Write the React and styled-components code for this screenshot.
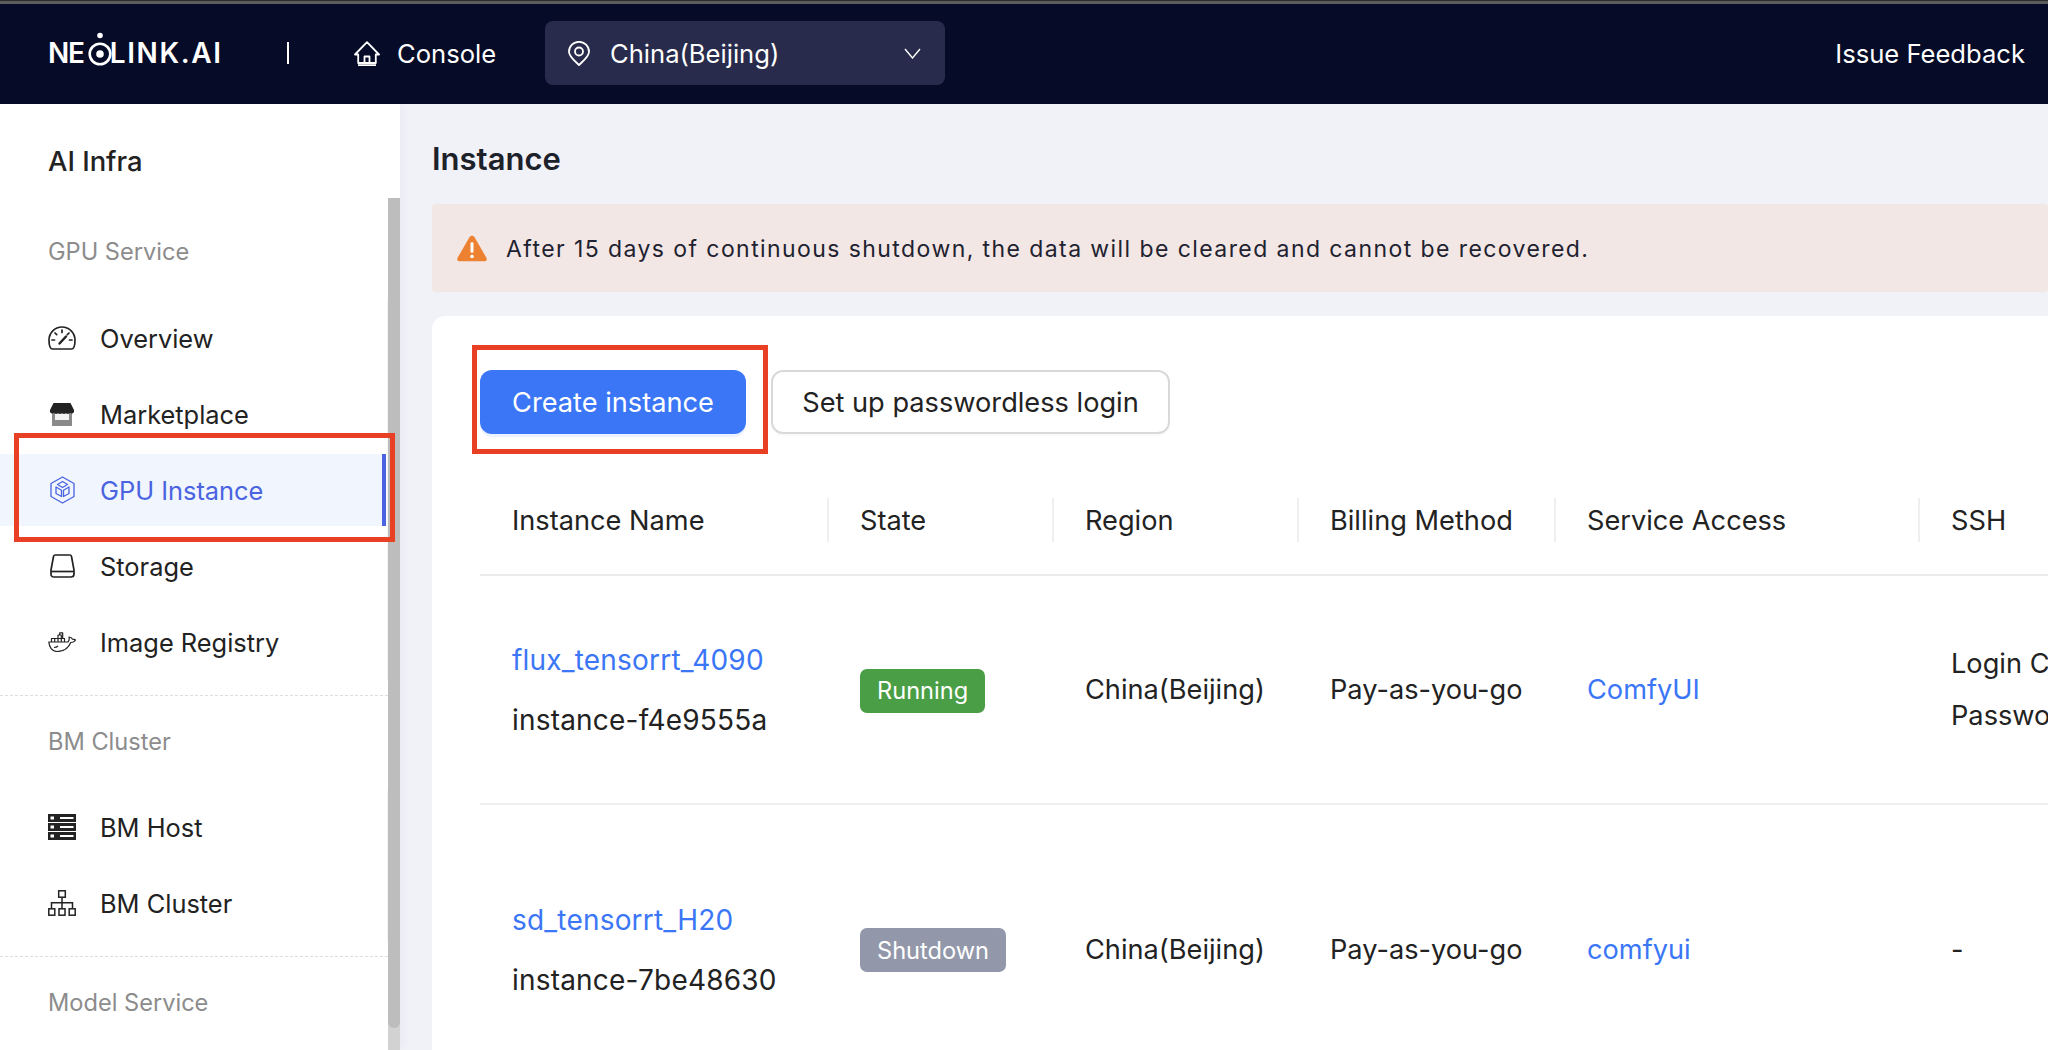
import styled, { createGlobalStyle } from "styled-components";

const GlobalStyle = createGlobalStyle`
  html, body {
    margin: 0;
    padding: 0;
    background: #f1f2f8;
  }
  * {
    box-sizing: border-box;
  }
`;

const HomeIcon = () => (
  <svg width="26" height="25" viewBox="0 0 26 25" fill="none" stroke="#fff" strokeWidth="1.8" strokeLinejoin="round">
    <path d="M1 13.5 13 1.2l12 12.3h-3.2V22H4.2v-8.5z" />
    <path d="M10.5 22v-6.5h5V22M4 24.2h18" />
  </svg>
);

const PinIcon = () => (
  <svg width="22" height="25" viewBox="0 0 22 25" fill="none" stroke="#fff" strokeWidth="1.8">
    <path d="M11 24C7 20 1 15.8 1 10.8a10 10 0 0 1 20 0C21 15.8 15 20 11 24z" strokeLinejoin="round" />
    <circle cx="11" cy="10.5" r="4" />
  </svg>
);

const ChevronIcon = () => (
  <svg width="17" height="11" viewBox="0 0 17 11" fill="none" stroke="#fff" strokeWidth="1.4">
    <path d="M1 1l7.5 9L16 1" />
  </svg>
);

const WarnIcon = () => (
  <svg width="32" height="28" viewBox="0 0 30 26">
    <path d="M15 1.500c1 0 1.800.5 2.400 1.500l11 19c1 1.900 0 3.500-2 3.500H3.600c-2 0-3-1.600-2-3.500l11-19c.6-1 1.400-1.500 2.400-1.500z" fill="#ed8132" />
    <rect x="13.600" y="7.500" width="2.800" height="10" rx="1.200" fill="#fff" />
    <circle cx="15" cy="21" r="1.700" fill="#fff" />
  </svg>
);

const GaugeIcon = () => (
  <svg width="28" height="24" viewBox="0 0 28 24" fill="none" stroke="#222" strokeWidth="1.7" strokeLinecap="round">
    <path d="M4.500 23h19c2.200 0 3.500-3.400 3.500-9a13 13 0 0 0-26 0c0 5.600 1.300 9 3.500 9z" />
    <path d="M14 4v2.500M7 7l1.700 1.700M4 14h2.500M24 14h-2.500M21 7l-1.700 1.700" />
    <path d="M11.500 17.500 18 10.500" strokeWidth="2.400" />
  </svg>
);

const StoreIcon = () => (
  <svg width="24" height="23" viewBox="0 0 24 23">
    <rect x="2" y="9" width="20" height="14" fill="#8a8a8a" />
    <rect x="5" y="11" width="14" height="6" fill="#f1f1f1" />
    <path d="M3.500 0h17L24 7v2c-1.300 2-3 2-4 .8-1.200 1.400-2.800 1.400-4 0-1.200 1.400-2.800 1.400-4 0-1.200 1.400-2.800 1.400-4 0-1.200 1.400-2.800 1.400-4 0C3 11 1.300 11 0 9V7z" fill="#222" />
  </svg>
);

const HexCubeIcon = () => (
  <svg width="25" height="28" viewBox="0 0 25 28" fill="none" stroke="#4a63e0" strokeWidth="1.300" strokeLinejoin="round">
    <path d="M12.500 1 24 7.500v13L12.500 27 1 20.500v-13z" />
    <path d="M12.500 5.500 17.500 8.500l-5 3-5-3zM6 11l5.500 3.200v6.300L6 17.500zM19 11l-5.500 3.200v6.300L19 17.500z" />
  </svg>
);

const DriveIcon = () => (
  <svg width="25" height="24" viewBox="0 0 25 24" fill="none" stroke="#222" strokeWidth="1.700" strokeLinejoin="round">
    <path d="M5 1h15c1 0 1.500 1 1.600 2L24 16v4c0 2-1 3-3 3H4c-2 0-3-1-3-3v-4L3.400 3C3.500 2 4 1 5 1z" />
    <path d="M1 17.500h23" />
  </svg>
);

const DockerIcon = () => (
  <svg width="28" height="20" viewBox="0 0 28 20" fill="none" stroke="#222" strokeWidth="1.200" strokeLinejoin="round">
    <path d="M.8 10H20c1-1 1.500-3 1-5 1.800 0 3 1 3.500 2.200 1 0 2.300.2 3 .8-1 2-3 2.500-4.800 2.500C20.500 16 15.500 19.500 9 19.500 4 19.500 1.200 15 .8 10z" />
    <path d="M3.500 10V6.500h13V10M6.700 6.500V10M10 6.500V10M13.300 6.500V10M10 6.500V3h3.300v3.500M11.700 3V.8h3v5.700" />
    <path d="M6 15.500c1.500 0 3-.5 4-1.500" />
  </svg>
);

const ServerIcon = () => (
  <svg width="28" height="26" viewBox="0 0 28 26">
    {[0, 9, 18].map((y) => (
      <g key={y}>
        <rect y={y} width="28" height="8" fill="#222" />
        <rect x="2.500" y={y + 2.500} width="3.500" height="3" fill="#fff" />
        <rect x="12" y={y + 3} width="13.500" height="2" fill="#fff" />
      </g>
    ))}
  </svg>
);

const TreeIcon = () => (
  <svg width="28" height="26" viewBox="0 0 28 26" fill="none" stroke="#222" strokeWidth="1.500">
    <rect x="10.700" y=".8" width="6.600" height="6.400" />
    <path d="M14 7.200v11M3.500 18.200V12.700h21v5.500" />
    <rect x=".8" y="18.800" width="6" height="6.400" />
    <rect x="11" y="18.800" width="6" height="6.400" />
    <rect x="21.200" y="18.800" width="6" height="6.400" />
  </svg>
);

const gpuItems = [
  { label: "Overview", icon: <GaugeIcon /> },
  { label: "Marketplace", icon: <StoreIcon /> },
  { label: "GPU Instance", icon: <HexCubeIcon />, active: true },
  { label: "Storage", icon: <DriveIcon /> },
  { label: "Image Registry", icon: <DockerIcon /> },
];

const bmItems = [
  { label: "BM Host", icon: <ServerIcon /> },
  { label: "BM Cluster", icon: <TreeIcon /> },
];

const MenuList = ({ items }) => (
  <Menu>
    {items.map((item) => (
      <MenuRow key={item.label} $active={item.active}>
        <MenuIcon>{item.icon}</MenuIcon>
        {item.label}
      </MenuRow>
    ))}
  </Menu>
);

const App = () => {
  return (
    <Page>
      <GlobalStyle />
      <TopStrip />
      <Header>
        <Logo>
          <LogoPart $spacing={-1.2}>NE</LogoPart>
          <svg width="24" height="44" viewBox="0 0 24 44" fill="none">
            <circle cx="12" cy="4.500" r="2.800" fill="#fff" />
            <circle cx="12" cy="23" r="10.300" stroke="#fff" strokeWidth="2.600" />
            <circle cx="12" cy="23" r="3.800" fill="#fff" />
          </svg>
          <LogoPart $spacing={1.6}>LINK.AI</LogoPart>
        </Logo>
        <HeaderDivider />
        <ConsoleLink>
          <HomeIcon />
          Console
        </ConsoleLink>
        <RegionSelect>
          <PinIcon />
          <RegionName>China(Beijing)</RegionName>
          <ChevronIcon />
        </RegionSelect>
        <Feedback>Issue Feedback</Feedback>
      </Header>

      <Body>
        <Sidebar>
          <SideTitle>AI Infra</SideTitle>
          <GroupLabel $height={64}>GPU Service</GroupLabel>
          <MenuTop $space={17} />
          <MenuList items={gpuItems} />
          <DashLine />
          <GroupLabel $height={90}>BM Cluster</GroupLabel>
          <MenuTop $space={3} />
          <MenuList items={bmItems} />
          <DashLine />
          <GroupLabel $height={90}>Model Service</GroupLabel>
          <ScrollTrack>
            <ScrollThumb />
          </ScrollTrack>
        </Sidebar>

        <Main>
          <PageTitle>Instance</PageTitle>
          <Alert>
            <WarnIcon />
            <AlertText>After 15 days of continuous shutdown, the data will be cleared and cannot be recovered.</AlertText>
          </Alert>
          <Card>
            <Actions>
              <PrimaryButton>Create instance</PrimaryButton>
              <GhostButton>Set up passwordless login</GhostButton>
            </Actions>

            <Table>
              <HeadRow>
                <HeadCell $first>Instance Name</HeadCell>
                <HeadCell>State</HeadCell>
                <HeadCell>Region</HeadCell>
                <HeadCell>Billing Method</HeadCell>
                <HeadCell>Service Access</HeadCell>
                <HeadCell>SSH</HeadCell>
              </HeadRow>

              <Row $height={229}>
                <NameCell>
                  <LinkText>flux_tensorrt_4090</LinkText>
                  <span>instance-f4e9555a</span>
                </NameCell>
                <Cell><Badge $bg="#4a9e45">Running</Badge></Cell>
                <Cell>China(Beijing)</Cell>
                <Cell>Pay-as-you-go</Cell>
                <Cell><LinkText>ComfyUI</LinkText></Cell>
                <SshCell>
                  <span>Login Command</span>
                  <span>Password</span>
                </SshCell>
              </Row>

              <Row $height={290}>
                <NameCell>
                  <LinkText>sd_tensorrt_H20</LinkText>
                  <span>instance-7be48630</span>
                </NameCell>
                <Cell><Badge $bg="#9297aa">Shutdown</Badge></Cell>
                <Cell>China(Beijing)</Cell>
                <Cell>Pay-as-you-go</Cell>
                <Cell><LinkText>comfyui</LinkText></Cell>
                <Cell>-</Cell>
              </Row>
            </Table>
          </Card>
        </Main>
      </Body>

      <RedBox $left={14} $top={433} $width={381} $height={109} />
      <RedBox $left={472} $top={345} $width={296} $height={109} />
    </Page>
  );
};

export default App;

const Page = styled.div`
  position: relative;
  width: 2048px;
  height: 1050px;
  overflow: hidden;
  display: flex;
  flex-direction: column;
  font-family: Inter, "Liberation Sans", sans-serif;
  font-size: 25.4px;
  color: #222;
  background: #f1f2f8;
`;

const TopStrip = styled.div`
  flex: none;
  height: 4px;
  background: linear-gradient(#2b2b2b 0, #2b2b2b 1px, #5c5c5c 1px);
`;

const Header = styled.header`
  flex: none;
  height: 100px;
  display: flex;
  align-items: center;
  padding: 0 23px 2px 48px;
  background: #060b28;
  color: #fff;
  font-size: 25.6px;
`;

const Logo = styled.div`
  display: flex;
  align-items: center;
  width: 174px;
  font-size: 28px;
  font-weight: 600;
  white-space: nowrap;

  svg {
    flex: none;
    margin: 0 -2px 0 4px;
  }
`;

const LogoPart = styled.span`
  letter-spacing: ${(p) => p.$spacing}px;
`;

const HeaderDivider = styled.div`
  width: 2px;
  height: 22px;
  margin: 0 65px;
  background: #fff;
`;

const ConsoleLink = styled.div`
  display: flex;
  align-items: center;
  gap: 17px;
  width: 191px;
`;

const RegionSelect = styled.div`
  display: flex;
  align-items: center;
  width: 400px;
  height: 64px;
  padding: 0 24px 0 23px;
  border-radius: 8px;
  background: #282b4b;
`;

const RegionName = styled.span`
  flex: 1;
  margin-left: 20px;
`;

const Feedback = styled.div`
  margin-left: auto;
`;

const Body = styled.div`
  flex: 1;
  display: flex;
  min-height: 0;
`;

const Sidebar = styled.aside`
  position: relative;
  flex: none;
  width: 400px;
  background: #fff;
  box-shadow: 3px 0 10px rgba(20, 30, 60, 0.03);
  z-index: 1;
`;

const SideTitle = styled.div`
  height: 115px;
  padding-left: 48px;
  line-height: 114px;
  font-size: 27.4px;
  font-weight: 500;
`;

const GroupLabel = styled.div`
  display: flex;
  align-items: center;
  height: ${(p) => p.$height}px;
  padding-left: 48px;
  color: #8c8c8c;
  font-size: 23.6px;
`;

const MenuTop = styled.div`
  height: ${(p) => p.$space}px;
`;

const Menu = styled.nav`
  width: 388px;
  border-right: 1px solid #f4f4f4;
`;

const MenuRow = styled.div`
  display: flex;
  align-items: center;
  gap: 24px;
  width: 386px;
  height: ${(p) => (p.$active ? "72px" : "76px")};
  margin: ${(p) => (p.$active ? "2px 0" : "0")};
  padding-left: 48px;
  color: ${(p) => (p.$active ? "#4a63e0" : "#222")};
  background: ${(p) => (p.$active ? "#f1f5fe" : "transparent")};
  border-right: ${(p) => (p.$active ? "4px solid #4a63e0" : "none")};
`;

const MenuIcon = styled.span`
  display: flex;
  justify-content: center;
  width: 28px;
`;

const DashLine = styled.div`
  width: 388px;
  margin-top: 15px;
  border-top: 1px dashed #dedede;
`;

const ScrollTrack = styled.div`
  position: absolute;
  top: 94px;
  right: 0;
  bottom: 0;
  width: 12px;
  background: #d2d2d2;
`;

const ScrollThumb = styled.div`
  height: 830px;
  border-radius: 0 0 6px 6px;
  background: #bdbdbd;
`;

const Main = styled.main`
  flex: 1;
  min-width: 0;
  padding-left: 32px;
  overflow: hidden;
  font-size: 27.2px;
`;

const PageTitle = styled.h1`
  margin: 30px 0 20px;
  height: 50px;
  line-height: 50px;
  font-size: 31px;
  font-weight: 600;
  color: #1d2129;
`;

const Alert = styled.div`
  display: flex;
  align-items: center;
  gap: 18px;
  height: 88px;
  padding-left: 24px;
  border-radius: 4px;
  background: #f2e7e5;
  color: #1f2230;

  svg {
    flex: none;
  }
`;

const AlertText = styled.span`
  padding-top: 2px;
  font-size: 23px;
  letter-spacing: 1.42px;
`;

const Card = styled.section`
  margin-top: 24px;
  padding: 54px 0 0 48px;
  height: 900px;
  border-radius: 13px 0 0 0;
  background: #fff;
  overflow: hidden;
`;

const Actions = styled.div`
  display: flex;
  gap: 25px;
`;

const PrimaryButton = styled.button`
  width: 266px;
  height: 64px;
  border: 0;
  border-radius: 12px;
  background: #3b76f6;
  box-shadow: 0 3px 0 rgba(59, 118, 246, 0.1);
  color: #fff;
  font: inherit;
`;

const GhostButton = styled.button`
  width: 399px;
  height: 64px;
  border: 2px solid #d9d9d9;
  border-radius: 12px;
  background: #fff;
  box-shadow: 0 2px 0 rgba(0, 0, 0, 0.02);
  color: #222;
  font: inherit;
`;

const Table = styled.div`
  width: 1738px;
  margin-top: 31px;
`;

const columns = "347px 225px 245px 257px 364px 300px";

const HeadRow = styled.div`
  display: grid;
  grid-template-columns: ${columns};
  align-items: center;
  height: 111px;
  border-bottom: 2px solid #ebebeb;
`;

const HeadCell = styled.div`
  display: flex;
  align-items: center;
  height: 44px;
  padding: 2px 0 0 ${(p) => (p.$first ? "32px" : "31px")};
  border-left: ${(p) => (p.$first ? "none" : "2px solid #efefef")};
`;

const Row = styled.div`
  display: grid;
  grid-template-columns: ${columns};
  align-items: center;
  height: ${(p) => p.$height}px;
  border-bottom: 2px solid #f0f0f0;
`;

const Cell = styled.div`
  padding-left: 33px;
`;

const NameCell = styled(Cell)`
  display: flex;
  flex-direction: column;
  padding: 1px 0 0 32px;
  font-size: 28px;
  letter-spacing: 0.2px;
  line-height: 60px;
`;

const SshCell = styled(Cell)`
  display: flex;
  flex-direction: column;
  white-space: nowrap;
  line-height: 52px;
`;

const LinkText = styled.span`
  color: #3b76f6;
`;

const Badge = styled.span`
  display: inline-flex;
  align-items: center;
  height: 44px;
  margin-top: 2px;
  padding: 0 17px;
  border-radius: 7px;
  background: ${(p) => p.$bg};
  color: #fff;
  font-size: 23.6px;
`;

const RedBox = styled.div`
  position: absolute;
  z-index: 2;
  left: ${(p) => p.$left}px;
  top: ${(p) => p.$top}px;
  width: ${(p) => p.$width}px;
  height: ${(p) => p.$height}px;
  border: 5px solid #e83f25;
  pointer-events: none;
`;
